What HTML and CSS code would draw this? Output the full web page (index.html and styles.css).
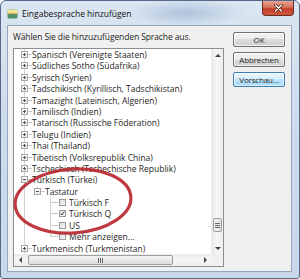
FILE: index.html
```html
<!DOCTYPE html>
<html lang="de">
<head>
<meta charset="utf-8">
<title>Eingabesprache hinzufügen</title>
<link rel="stylesheet" href="styles.css">
</head>
<body>
<div class="window">
  <div class="titlebar">
    <svg class="app-icon" width="11" height="11" viewBox="0 0 11 11">
      <rect x="0.5" y="1.5" width="10" height="9" rx="1.5" fill="#4f8f6a"/>
      <rect x="0.5" y="1.5" width="10" height="4.5" rx="1.5" fill="#f3e39a"/>
      <path d="M1 6 Q5.5 4.5 10 6" stroke="#c9a84a" stroke-width="1" fill="none"/>
    </svg>
    <span class="title">Eingabesprache hinzufügen</span>
    <div class="close">
      <svg width="9" height="8" viewBox="0 0 9 8"><path d="M1.5 1 L7.5 7 M7.5 1 L1.5 7" stroke="#3a1a14" stroke-width="2.6" stroke-linecap="round"/><path d="M1.5 1 L7.5 7 M7.5 1 L1.5 7" stroke="#fff" stroke-width="1.4" stroke-linecap="round"/></svg>
    </div>
  </div>
  <div class="client">
    <div class="main">
      <div class="prompt">Wählen Sie die hinzuzufügenden Sprache aus.</div>
      <div class="listbox">
        <div class="tree">
          <div class="row"><span class="c t"><i class="box plus"></i></span><span class="txt">Spanisch (Vereinigte Staaten)</span></div>
          <div class="row"><span class="c t"><i class="box plus"></i></span><span class="txt">Südliches Sotho (Südafrika)</span></div>
          <div class="row"><span class="c t"><i class="box plus"></i></span><span class="txt">Syrisch (Syrien)</span></div>
          <div class="row"><span class="c t"><i class="box plus"></i></span><span class="txt">Tadschikisch (Kyrillisch, Tadschikistan)</span></div>
          <div class="row"><span class="c t"><i class="box plus"></i></span><span class="txt">Tamazight (Lateinisch, Algerien)</span></div>
          <div class="row"><span class="c t"><i class="box plus"></i></span><span class="txt">Tamilisch (Indien)</span></div>
          <div class="row"><span class="c t"><i class="box plus"></i></span><span class="txt">Tatarisch (Russische Föderation)</span></div>
          <div class="row"><span class="c t"><i class="box plus"></i></span><span class="txt">Telugu (Indien)</span></div>
          <div class="row"><span class="c t"><i class="box plus"></i></span><span class="txt">Thai (Thailand)</span></div>
          <div class="row"><span class="c t"><i class="box plus"></i></span><span class="txt">Tibetisch (Volksrepublik China)</span></div>
          <div class="row"><span class="c t"><i class="box plus"></i></span><span class="txt">Tschechisch (Tschechische Republik)</span></div>
          <div class="row"><span class="c t"><i class="box minus"></i></span><span class="txt">Türkisch (Türkei)</span></div>
          <div class="row"><span class="c v"></span><span class="c l"><i class="box minus"></i></span><span class="txt">Tastatur</span></div>
          <div class="row"><span class="c v"></span><span class="c"></span><span class="c t"></span><i class="chk"></i><span class="txt">Türkisch F</span></div>
          <div class="row"><span class="c v"></span><span class="c"></span><span class="c t"></span><i class="chk on"><svg width="7" height="7" viewBox="0 0 7 7"><path d="M1 3.5 L2.8 5.5 L6 1" stroke="#1d2b3a" stroke-width="1.3" fill="none"/></svg></i><span class="txt">Türkisch Q</span></div>
          <div class="row"><span class="c v"></span><span class="c"></span><span class="c t"></span><i class="chk"></i><span class="txt">US</span></div>
          <div class="row"><span class="c v"></span><span class="c"></span><span class="c l"></span><i class="chk"></i><span class="txt">Mehr anzeigen...</span></div>
          <div class="row"><span class="c t"><i class="box plus"></i></span><span class="txt">Turkmenisch (Turkmenistan)</span></div>
        </div>
        <div class="vscroll">
          <div class="sbtn"><i class="arr up"></i></div>
          <div class="vtrack"><div class="vthumb"><i class="grip"></i></div></div>
          <div class="sbtn"><i class="arr down"></i></div>
        </div>
        <div class="hscroll">
          <div class="sbtn"><i class="arr left"></i></div>
          <div class="htrack"><div class="hthumb"><i class="grip"></i></div></div>
          <div class="sbtn"><i class="arr right"></i></div>
        </div>
        <div class="corner"></div>
      </div>
    </div>
    <div class="buttons">
      <button class="btn">OK</button>
      <button class="btn">Abbrechen</button>
      <button class="btn default">Vorschau...</button>
    </div>
  </div>
  <svg class="annotation" width="300" height="279" viewBox="0 0 300 279">
    <ellipse cx="73" cy="201" rx="58" ry="32" transform="rotate(-4 73 201)" fill="none" stroke="#b8232b" stroke-width="3.2" stroke-opacity="0.9"/>
  </svg>
</div>
</body>
</html>
```
FILE: styles.css
```css
* { box-sizing: border-box; }
html, body { margin: 0; padding: 0; background: #fff; }
body { font-family: "Open Sans", "Noto Sans", sans-serif; font-size: 8.5px; color: #262626; }

.window {
  position: relative;
  width: 300px;
  height: 279px;
  border: 1px solid #56698a;
  border-radius: 6px 6px 3px 3px;
  padding: 0 7px 6px 6px;
  background:
    radial-gradient(ellipse 60px 14px at 185px 12px, rgba(140,168,200,0.55), rgba(140,168,200,0) 100%),
    linear-gradient(180deg, #dbe6f2 0%, #cfdcec 40%, #c8d7ea 100%);
  display: flex;
  flex-direction: column;
  overflow: hidden;
}

.titlebar {
  height: 24px;
  display: flex;
  align-items: center;
  flex: none;
}
.app-icon { flex: none; margin-top: 1px; }
.title { margin-left: 4px; font-size: 8.5px; color: #111; }
.close {
  margin-left: auto;
  margin-right: -2px;
  align-self: flex-start;
  width: 32px;
  height: 15px;
  border: 1px solid #6b2a20;
  border-top: none;
  border-radius: 0 0 4px 4px;
  background: linear-gradient(180deg, #e8a593 0%, #d4735c 45%, #c2412a 55%, #d0583c 100%);
  display: flex;
  align-items: center;
  justify-content: center;
}

.client {
  flex: 1;
  border: 1px solid #97a7bb;
  background: #f0f0f0;
  padding: 5px 6px 4px 5px;
  display: flex;
  gap: 9px;
}

.main { width: 211px; display: flex; flex-direction: column; }
.prompt { height: 12px; line-height: 12px; margin-bottom: 5px; white-space: nowrap; letter-spacing: -0.1px; }

.listbox {
  flex: 1;
  border: 1px solid #8a8f97;
  background: #fff;
  display: grid;
  grid-template-columns: 1fr 12px;
  grid-template-rows: 1fr 12px;
  overflow: hidden;
}

.tree { overflow: hidden; padding-left: 4px; }
.row { height: 11.4px; display: flex; align-items: stretch; white-space: nowrap; }
.txt { line-height: 11.4px; margin-left: 1px; }

.c { position: relative; width: 13px; flex: none; }
.c.v::before, .c.t::before, .c.l::before {
  content: ""; position: absolute; left: 6px; top: 0; width: 1px; background: #d2d2d2;
}
.c.v::before, .c.t::before { bottom: 0; }
.c.l::before { height: 6px; }
.c.t::after, .c.l::after {
  content: ""; position: absolute; left: 7px; right: -1px; top: 5px; height: 1px; background: #c8c8c8;
}

.box {
  position: absolute; left: 3px; top: 2px; width: 7px; height: 7px;
  border: 1px solid #a6a6a6; background: linear-gradient(180deg, #fff, #e8e8e8); z-index: 1;
}
.box::before { content: ""; position: absolute; left: 1px; top: 2px; width: 3px; height: 1px; background: #555; }
.box.plus::after { content: ""; position: absolute; left: 2px; top: 1px; width: 1px; height: 3px; background: #555; }

.chk {
  flex: none; width: 7px; height: 7px; margin: 2px 2px 0 2px;
  border: 1px solid #9a9a9a; background: linear-gradient(135deg, #dadada, #fafafa);
  display: flex; align-items: center; justify-content: center;
}
.chk svg { display: block; }

.vscroll, .hscroll { display: flex; background: linear-gradient(90deg, #e9e9e9, #f5f5f5 40%, #eeeeee); }
.vscroll { flex-direction: column; border-left: 1px solid #ececec; }
.hscroll { background: linear-gradient(180deg, #e9e9e9, #f5f5f5 40%, #eeeeee); }
.corner { background: #f0f0f0; }
.sbtn { width: 12px; height: 12px; flex: none; display: flex; align-items: center; justify-content: center; }
.arr { width: 0; height: 0; border: 3px solid transparent; }
.arr.up { border-bottom: 3px solid #444; border-top-width: 0; }
.arr.down { border-top: 3px solid #444; border-bottom-width: 0; }
.arr.left { border-right: 3px solid #444; border-left-width: 0; }
.arr.right { border-left: 3px solid #444; border-right-width: 0; }

.vtrack { flex: 1; }
.vthumb {
  margin: 157px 1px 0 1px; height: 14px;
  border: 1px solid #9d9d9d; border-radius: 2px;
  background: linear-gradient(90deg, #f4f4f4, #e2e2e2);
  display: flex; align-items: center; justify-content: center;
}
.htrack { flex: 1; }
.hthumb {
  margin: 1px 26px 1px 2px; height: 10px;
  border: 1px solid #9d9d9d; border-radius: 2px;
  background: linear-gradient(180deg, #f4f4f4, #dedede);
  display: flex; align-items: center; justify-content: center;
}
.grip { width: 5px; height: 5px; background: repeating-linear-gradient(180deg, #666 0 1px, transparent 1px 2px); }
.hthumb .grip { background: repeating-linear-gradient(90deg, #666 0 1px, transparent 1px 2px); }

.buttons { width: 52px; display: flex; flex-direction: column; gap: 5px; padding-top: 1px; }
.btn {
  height: 15px; padding: 0; margin: 0;
  font-family: inherit; font-size: 8px; letter-spacing: -0.15px; color: #262626;
  white-space: nowrap; overflow: visible;
  border: 1px solid #707070; border-radius: 2px;
  background: linear-gradient(180deg, #f2f2f2 0%, #ebebeb 45%, #dddddd 50%, #cfcfcf 100%);
  box-shadow: inset 0 0 0 1px rgba(255,255,255,0.7);
}
.btn.default {
  border-color: #3c7fb1;
  background: linear-gradient(180deg, #eaf6fd 0%, #d9f0fc 45%, #bee6fd 50%, #a7d9f5 100%);
  box-shadow: inset 0 0 0 1px rgba(255,255,255,0.6);
}

.annotation { position: absolute; left: -1px; top: -1px; pointer-events: none; }
```
